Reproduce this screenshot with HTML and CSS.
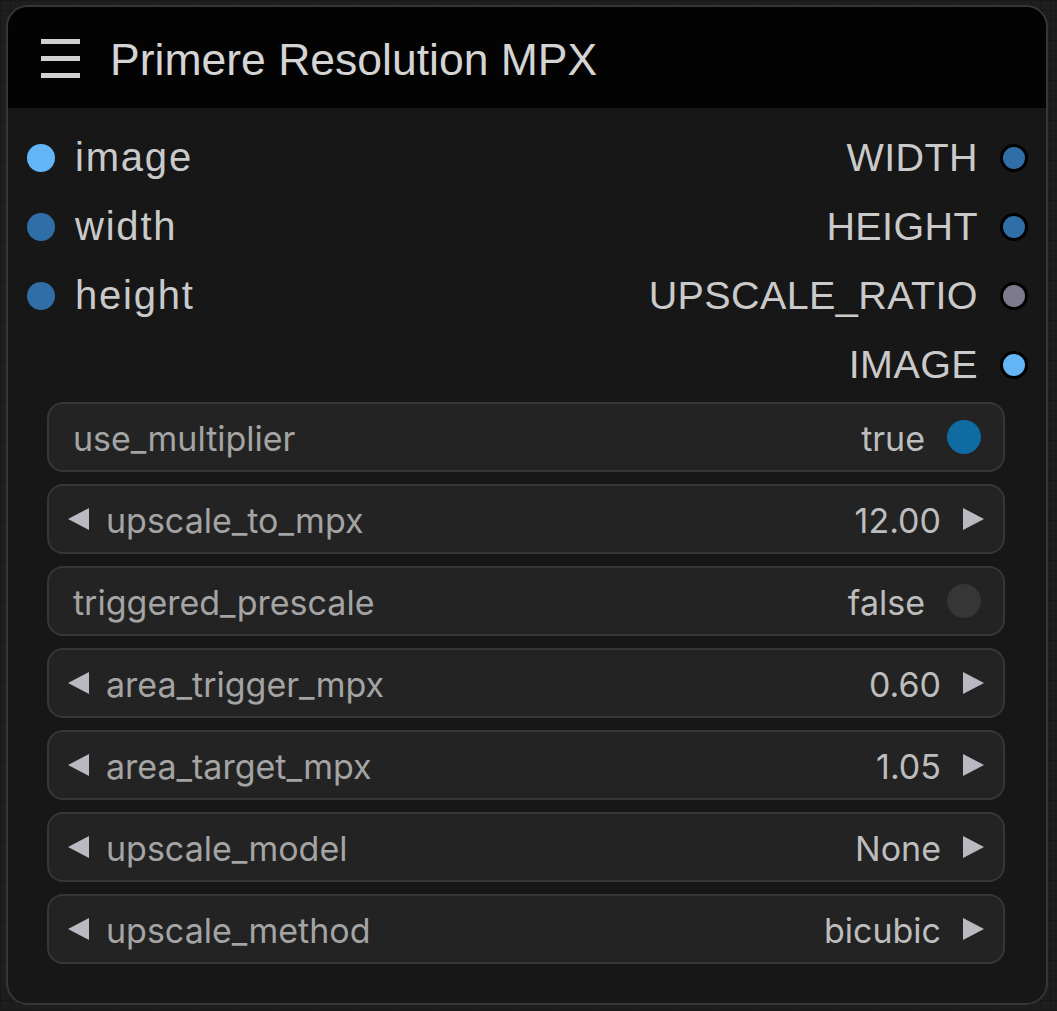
FILE: index.html
```html
<!DOCTYPE html>
<html lang="en">
<head>
<meta charset="utf-8">
<title>Primere Resolution MPX</title>
<link rel="stylesheet" href="styles.css">
</head>
<body>
<div class="node">
  <div class="node-header">
    <svg class="menu-icon" width="40" height="40" viewBox="0 0 40 40" aria-hidden="true">
      <rect x="0" y="1" width="39" height="5" fill="#d0d0d0"/>
      <rect x="0" y="18" width="39" height="5" fill="#d0d0d0"/>
      <rect x="0" y="35" width="39" height="5" fill="#d0d0d0"/>
    </svg>
    <div class="node-title">Primere Resolution MPX</div>
  </div>
  <div class="node-body">
    <div class="slots">
      <div class="slot-col inputs">
        <div class="slot"><span class="dot dot-image"></span><span class="slot-label">image</span></div>
        <div class="slot"><span class="dot dot-int"></span><span class="slot-label">width</span></div>
        <div class="slot"><span class="dot dot-int"></span><span class="slot-label">height</span></div>
      </div>
      <div class="slot-col outputs">
        <div class="slot"><span class="slot-label">WIDTH</span><span class="dot out dot-int"></span></div>
        <div class="slot"><span class="slot-label">HEIGHT</span><span class="dot out dot-int"></span></div>
        <div class="slot"><span class="slot-label">UPSCALE_RATIO</span><span class="dot out dot-float"></span></div>
        <div class="slot"><span class="slot-label">IMAGE</span><span class="dot out dot-image"></span></div>
      </div>
    </div>
    <div class="widgets">
      <div class="widget toggle-w">
        <span class="w-label">use_multiplier</span>
        <span class="w-value">true</span>
        <span class="toggle on"></span>
      </div>
      <div class="widget number-w">
        <span class="arrow left"></span>
        <span class="w-label">upscale_to_mpx</span>
        <span class="w-value">12.00</span>
        <span class="arrow right"></span>
      </div>
      <div class="widget toggle-w">
        <span class="w-label">triggered_prescale</span>
        <span class="w-value">false</span>
        <span class="toggle"></span>
      </div>
      <div class="widget number-w">
        <span class="arrow left"></span>
        <span class="w-label">area_trigger_mpx</span>
        <span class="w-value">0.60</span>
        <span class="arrow right"></span>
      </div>
      <div class="widget number-w">
        <span class="arrow left"></span>
        <span class="w-label">area_target_mpx</span>
        <span class="w-value">1.05</span>
        <span class="arrow right"></span>
      </div>
      <div class="widget number-w">
        <span class="arrow left"></span>
        <span class="w-label">upscale_model</span>
        <span class="w-value">None</span>
        <span class="arrow right"></span>
      </div>
      <div class="widget number-w">
        <span class="arrow left"></span>
        <span class="w-label">upscale_method</span>
        <span class="w-value">bicubic</span>
        <span class="arrow right"></span>
      </div>
    </div>
  </div>
</div>
</body>
</html>
```
FILE: styles.css
```css
html, body {
  margin: 0;
  padding: 0;
}
body {
  background-color: #1e1e1e;
  background-image:
    linear-gradient(#181818 1px, transparent 1px),
    linear-gradient(90deg, #181818 1px, transparent 1px);
  background-size: 10px 10px;
  width: 1057px;
  height: 1011px;
  overflow: hidden;
  font-family: "Liberation Sans", Arial, sans-serif;
}
.node {
  margin: 5px 0 0 6px;
  width: 1042px;
  height: 1000px;
  box-sizing: border-box;
  border: 2px solid #363636;
  border-radius: 22px;
  background: #171717;
  overflow: hidden;
  display: flex;
  flex-direction: column;
}
.node-header {
  height: 101px;
  flex: none;
  background: #030303;
  display: flex;
  align-items: center;
  padding-left: 33px;
  box-sizing: border-box;
}
.menu-icon {
  flex: none;
}
.node-title {
  margin-left: 29px;
  margin-top: 5px;
  font-size: 44.5px;
  color: #d4d4d4;
  white-space: nowrap;
}
.node-body {
  flex: 1;
  display: flex;
  flex-direction: column;
  padding: 15px 18px 0 19px;
}
.slots {
  display: flex;
  justify-content: space-between;
}
.slot-col {
  display: flex;
  flex-direction: column;
}
.slot {
  height: 69px;
  display: flex;
  align-items: center;
}
.outputs .slot {
  justify-content: flex-end;
}
.slot-label {
  font-size: 39.5px;
  color: #cacaca;
  letter-spacing: 0.4px;
}
.inputs .slot-label {
  margin-left: 20px;
  font-size: 40px;
  letter-spacing: 1.8px;
}
.outputs .slot-label {
  margin-right: 22px;
}
.dot {
  width: 28px;
  height: 28px;
  border-radius: 50%;
  flex: none;
  box-sizing: border-box;
}
.dot.out {
  border: 3px solid #000;
}
.dot-image { background: #64b5f6; }
.dot-int { background: #2f6ea6; }
.dot-float { background: #7c7a8c; }
.widgets {
  margin: 3px 23px 0 20px;
  display: flex;
  flex-direction: column;
  gap: 12px;
}
.widget {
  height: 70px;
  box-sizing: border-box;
  border: 2px solid #363636;
  border-radius: 16px;
  background: #232323;
  display: flex;
  align-items: center;
  font-family: Inter, "Noto Sans", sans-serif;
  font-size: 34px;
}
.toggle-w {
  padding: 2px 22px 0 24px;
}
.number-w {
  padding: 2px 19px 0 19px;
}
.w-label {
  color: #a4a4a4;
  flex: 1;
  white-space: nowrap;
}
.w-value {
  color: #bdbdbd;
  white-space: nowrap;
}
.toggle {
  width: 34px;
  height: 34px;
  border-radius: 50%;
  background: #363636;
  margin-left: 22px;
  margin-top: -2px;
  flex: none;
}
.toggle.on {
  background: #0f6ba2;
}
.arrow {
  width: 0;
  height: 0;
  flex: none;
  margin-top: -2px;
  border-top: 11px solid transparent;
  border-bottom: 11px solid transparent;
}
.arrow.left {
  border-right: 21px solid #b9b9c2;
  margin-right: 17px;
}
.arrow.right {
  border-left: 21px solid #b9b9c2;
  margin-left: 22px;
}
```
